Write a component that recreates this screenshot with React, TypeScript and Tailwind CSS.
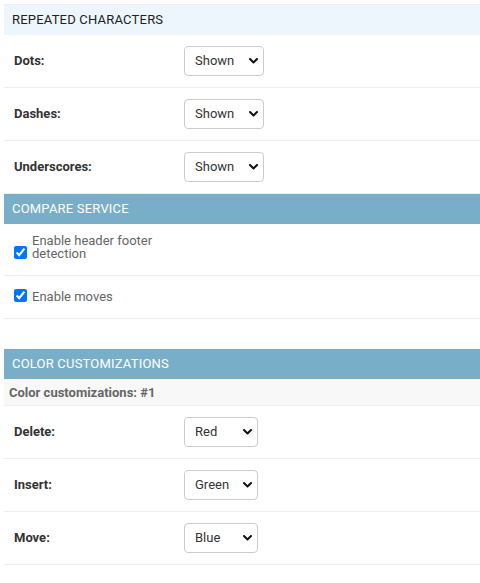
import React from 'react';

const font = { fontFamily: 'Roboto, "Liberation Sans", sans-serif' };

function Chevron() {
  return (
    <svg className="absolute right-[6px] top-1/2 -translate-y-1/2 w-[9px] h-[6px] pointer-events-none" viewBox="0 0 9 6" fill="none">
      <path d="M1 1l3.5 3.5L8 1" stroke="#111" strokeWidth="2" strokeLinecap="round" strokeLinejoin="round" />
    </svg>
  );
}

function SelectBox({ value, options, width }: { value: string; options: string[]; width: string }) {
  return (
    <div className={`relative h-[30px] ${width}`}>
      <select
        defaultValue={value}
        className="appearance-none w-full h-full border border-[#ccc] rounded-[4px] bg-white pl-[10px] pr-[20px] text-[13px] text-[#333] outline-none"
        style={font}
      >
        {options.map((o) => (
          <option key={o}>{o}</option>
        ))}
      </select>
      <Chevron />
    </div>
  );
}

function SelectRow({ label, value, options, width, pad }: { label: string; value: string; options: string[]; width: string; pad: string }) {
  return (
    <div className={`flex items-center pl-[10px] border-b border-[#eee] ${pad}`}>
      <div className="w-[170px] text-[13px] font-bold text-[#333]">{label}</div>
      <SelectBox value={value} options={options} width={width} />
    </div>
  );
}

function CheckRow({ label, className, labelWidth }: { label: string; className: string; labelWidth?: string }) {
  return (
    <div className={`flex items-end pl-[10px] border-b border-[#eee] ${className}`}>
      <input type="checkbox" defaultChecked className="w-[13px] h-[13px] m-0 mb-[1px] accent-[#0075ff]" />
      <span className={`ml-[5px] text-[13px] leading-[13px] text-[#666] ${labelWidth ?? ''}`}>{label}</span>
    </div>
  );
}

function BlueHeader({ title }: { title: string }) {
  return (
    <div className="h-[30px] flex items-center px-[8px] bg-[#79aec8] text-white text-[13px] uppercase tracking-[0.2px]">
      {title}
    </div>
  );
}

const shownOptions = ['Shown', 'Hidden'];
const colorOptions = ['Red', 'Green', 'Blue', 'Black'];

export default function App() {
  const rowPad = 'pt-[11px] pb-[11px]';
  return (
    <div className="w-[480px] h-[583px] bg-white overflow-hidden pl-[4px] pt-[4px]" style={font}>
      <div className="border-t border-[#eee]">
        <div className="h-[30px] flex items-center px-[8px] bg-[#eef6fd] text-[#222] text-[13px] uppercase tracking-[0.2px]">
          Repeated characters
        </div>
        <SelectRow label="Dots:" value="Shown" options={shownOptions} width="w-[80px]" pad={rowPad} />
        <SelectRow label="Dashes:" value="Shown" options={shownOptions} width="w-[80px]" pad={rowPad} />
        <SelectRow label="Underscores:" value="Shown" options={shownOptions} width="w-[80px]" pad={rowPad} />
      </div>

      <div>
        <BlueHeader title="Compare service" />
        <CheckRow label="Enable header footer detection" className="pt-[10px] pb-[15px]" labelWidth="w-[135px]" />
        <CheckRow label="Enable moves" className="pt-[13px] pb-[15px]" />
      </div>

      <div className="mt-[30px]">
        <BlueHeader title="Color customizations" />
        <div className="h-[27px] flex items-center pl-[5px] pt-[1px] bg-[#f8f8f8] border-b border-[#eee] text-[13px] font-bold text-[#666]">
          Color customizations: #1
        </div>
        <SelectRow label="Delete:" value="Red" options={colorOptions} width="w-[74px]" pad={rowPad} />
        <SelectRow label="Insert:" value="Green" options={colorOptions} width="w-[74px]" pad={rowPad} />
        <SelectRow label="Move:" value="Blue" options={colorOptions} width="w-[74px]" pad={rowPad} />
      </div>
    </div>
  );
}
